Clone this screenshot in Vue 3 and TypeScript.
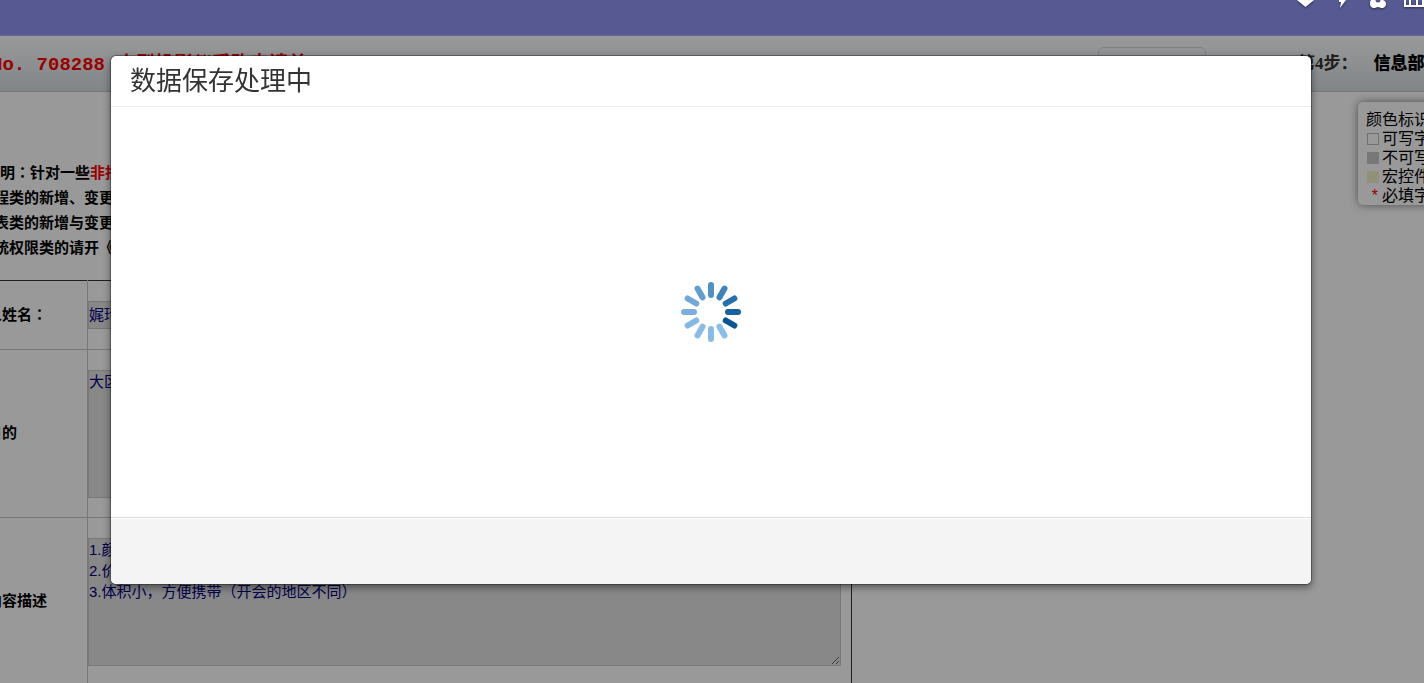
<script setup lang="ts">
const bars: string[] = [
  '#4f90c5', '#3f82ba', '#2470ae', '#1663a0', '#085596', '#8bbdea',
  '#88bbea', '#8abae7', '#86b8e6', '#7bb0de', '#72a8d8', '#609dd0',
]
const purpose = '大区会议使用'
const description = '1.颜色要求：白色\n2.价格适中\n3.体积小，方便携带（开会的地区不同）'
</script>

<template>
  <div class="page">
    <header class="topbar">
      <nav class="tools">
        <a href="#" aria-label="Favorites"><svg width="24" height="12" viewBox="0 0 24 12"><path d="M4 0h17l-8.500 7z" /></svg></a>
        <a href="#" aria-label="Quick actions"><svg width="24" height="12" viewBox="0 0 24 12"><path d="M10 0h7l-6 8 1-6h-2z" /></svg></a>
        <a href="#" aria-label="Settings"><svg width="24" height="12" viewBox="0 0 24 12"><path fill-rule="evenodd" d="M6 0h12q3 1 3 4a4 4 0 0 1-6 3.500q-2-1-4 0A4 4 0 0 1 5 4q0-3 1-4zM10.500 0a2.500 2.500 0 0 0 5 0z" /></svg></a>
        <a href="#" aria-label="Organization"><svg width="24" height="12" viewBox="0 0 24 12"><path fill-rule="evenodd" d="M3 0h20v7H3zM5 0v5h3V0zM10 0v5h5V0zM17 0v5h4V0z" /></svg></a>
      </nav>
    </header>

    <main class="main">
      <div class="stepbar">
        <h1>No. 708288 <span>小型投影仪采购申请单</span></h1>
        <button class="action" type="button" aria-label="提交"></button>
        <div class="step"><span>第4步：</span><strong>信息部处理</strong></div>
      </div>

      <div class="content">
        <div class="notes">
          <p class="lead">说明<span class="colon">：</span>针对一些<em>非批量</em>的申请</p>
          <p>流程类的新增、变更请开流程申请</p>
          <p>报表类的新增与变更请开报表申请</p>
          <p>系统权限类的请开《权限申请》</p>
        </div>

        <table class="form">
          <tbody>
            <tr class="short">
              <th scope="row"><label for="name">申请人姓名<span class="colon">：</span></label></th>
              <td><input id="name" type="text" value="娓玲" readonly /></td>
            </tr>
            <tr>
              <th scope="row"><label for="purpose">申请目的</label></th>
              <td><textarea id="purpose" :value="purpose" readonly></textarea></td>
            </tr>
            <tr>
              <th scope="row"><label for="description">申请内容描述</label></th>
              <td><textarea id="description" :value="description" readonly></textarea></td>
            </tr>
          </tbody>
        </table>
      </div>

      <aside class="legend">
        <div>颜色标识</div>
        <div><i class="box"></i>可写字段</div>
        <div><i class="box locked"></i>不可写字段</div>
        <div><i class="box macro"></i>宏控件</div>
        <div><b>*</b>必填字段</div>
      </aside>
      <div class="shade"></div>
    </main>

    <section class="modal" role="dialog" aria-modal="true" aria-labelledby="modal-title">
      <h2 id="modal-title">数据保存处理中</h2>
      <div class="modal-body">
        <svg width="60" height="60" viewBox="-30 -30 60 60" role="img" aria-label="加载中">
          <line
            v-for="(color, i) in bars" :key="i" x1="0" y1="-27" x2="0" y2="-17"
            :stroke="color" stroke-width="6" stroke-linecap="round" :transform="`rotate(${i * 30})`"
          />
        </svg>
      </div>
      <div class="modal-footer"></div>
    </section>
  </div>
</template>

<style>
body { margin: 0; overflow: hidden; }
</style>

<style scoped>
* { box-sizing: border-box; }
.page {
  display: flex;
  flex-direction: column;
  height: 100vh;
  overflow: hidden;
  font-family: "Liberation Sans", "Noto Sans CJK SC", sans-serif;
  font-size: 15px;
  color: #000;
}
.topbar {
  flex: none;
  height: 36px;
  background: #575993;
  border-bottom: 1px solid #66678f;
}
.tools {
  display: flex;
  justify-content: flex-end;
  gap: 12px;
  margin-right: -1px;
}
.tools a { display: block; height: 12px; }
.tools svg { display: block; fill: #fff; filter: drop-shadow(0 1px 1px rgba(0, 0, 0, 0.5)); }
.main { position: relative; flex: 1; min-height: 0; overflow: hidden; background: #fff; }
.stepbar {
  display: flex;
  align-items: center;
  height: 56px;
  background: linear-gradient(#fff, #d8dfe3);
  border-bottom: 1px solid #c4c8ca;
  white-space: nowrap;
}
h1 {
  display: flex;
  align-items: baseline;
  gap: 12px;
  margin: 2px 0 0 -9px;
  font: bold 19px/24px "Liberation Mono", "Noto Sans CJK SC", monospace;
  color: #f00;
}
.action {
  width: 108px;
  height: 34px;
  margin-left: auto;
  border: 1px solid #d4d4d4;
  border-radius: 6px;
  background: transparent;
}
.step {
  display: flex;
  gap: 16px;
  width: 126px;
  margin-left: 92px;
  font: bold 17px/24px "Liberation Serif", "Noto Sans CJK SC", serif;
}
.step span { color: #333; }
.content { padding-top: 67px; }
.notes { height: 121px; margin-left: -21px; font-weight: bold; white-space: nowrap; }
.notes p { margin: 0; line-height: 25px; }
.notes .lead { padding-left: 6px; }
.notes em { font-style: normal; color: #f00; }
.colon { font-family: "Noto Sans CJK JP", sans-serif; }
.form {
  width: 900px;
  margin-left: -48px;
  border-collapse: collapse;
  border: 1px solid #333;
  table-layout: fixed;
}
.form th, .form td { height: 169px; padding: 0; border: 1px solid #c8c8c8; }
.form tr:nth-child(2) th, .form tr:nth-child(2) td { height: 168px; }
.form th { width: 135px; padding: 0 0 2px 4px; text-align: left; font-weight: bold; line-height: 20px; }
.form .short th, .form .short td { height: 69px; }
.form tr:first-child th, .form tr:first-child td { border-top-color: #333; }
.form tr td { border-right-color: #333; }
.form input, .form textarea {
  display: block;
  margin: 0;
  padding: 0;
  border: 1px solid #c8c8c4;
  border-radius: 0;
  background: #e3e3e3;
  color: #000080;
  font-family: inherit;
  font-size: 15px;
}
.form input { width: 180px; height: 28px; padding-bottom: 4px; }
.form textarea { width: 753px; height: 128px; line-height: 21px; resize: both; }
.legend {
  position: absolute;
  top: 66px;
  right: -36px;
  width: 102px;
  padding: 8px 8px 0;
  height: 103px;
  border-radius: 5px;
  background: #fff;
  box-shadow: 0 0 8px rgba(0, 0, 0, 0.5);
  font-size: 16px;
  line-height: 19px;
  white-space: nowrap;
}
.legend div { display: flex; align-items: center; height: 19px; }
.box { flex: none; width: 12px; height: 12px; margin: 0 3px 0 1px; border: 1px solid #bbb; }
.locked { background: #c8c8c8; border-color: #c8c8c8; }
.macro { background: #f2f2c8; border-color: #f2f2c8; }
.legend b { width: 16px; padding: 4px 0 0 4px; font: 16px/19px "Liberation Mono", monospace; color: #f00; }
.shade { position: absolute; inset: 0; background: rgba(0, 0, 0, 0.4); }
.modal {
  position: fixed;
  top: 55px;
  left: 110px;
  right: 112px;
  overflow: hidden;
  border: 1px solid rgba(0, 0, 0, 0.3);
  border-radius: 6px;
  background: #fff;
  background-clip: padding-box;
  box-shadow: 0 3px 7px rgba(0, 0, 0, 0.4);
}
h2 {
  margin: 0;
  padding: 5px 19px;
  border-bottom: 1px solid #eee;
  font-size: 26px;
  font-weight: normal;
  line-height: 40px;
  color: #333;
}
.modal-body { display: flex; align-items: center; justify-content: center; height: 410px; }
.modal-footer {
  height: 67px;
  border-top: 1px solid #ddd;
  background: #f4f4f4;
  box-shadow: inset 0 1px 0 #fff;
}
</style>
